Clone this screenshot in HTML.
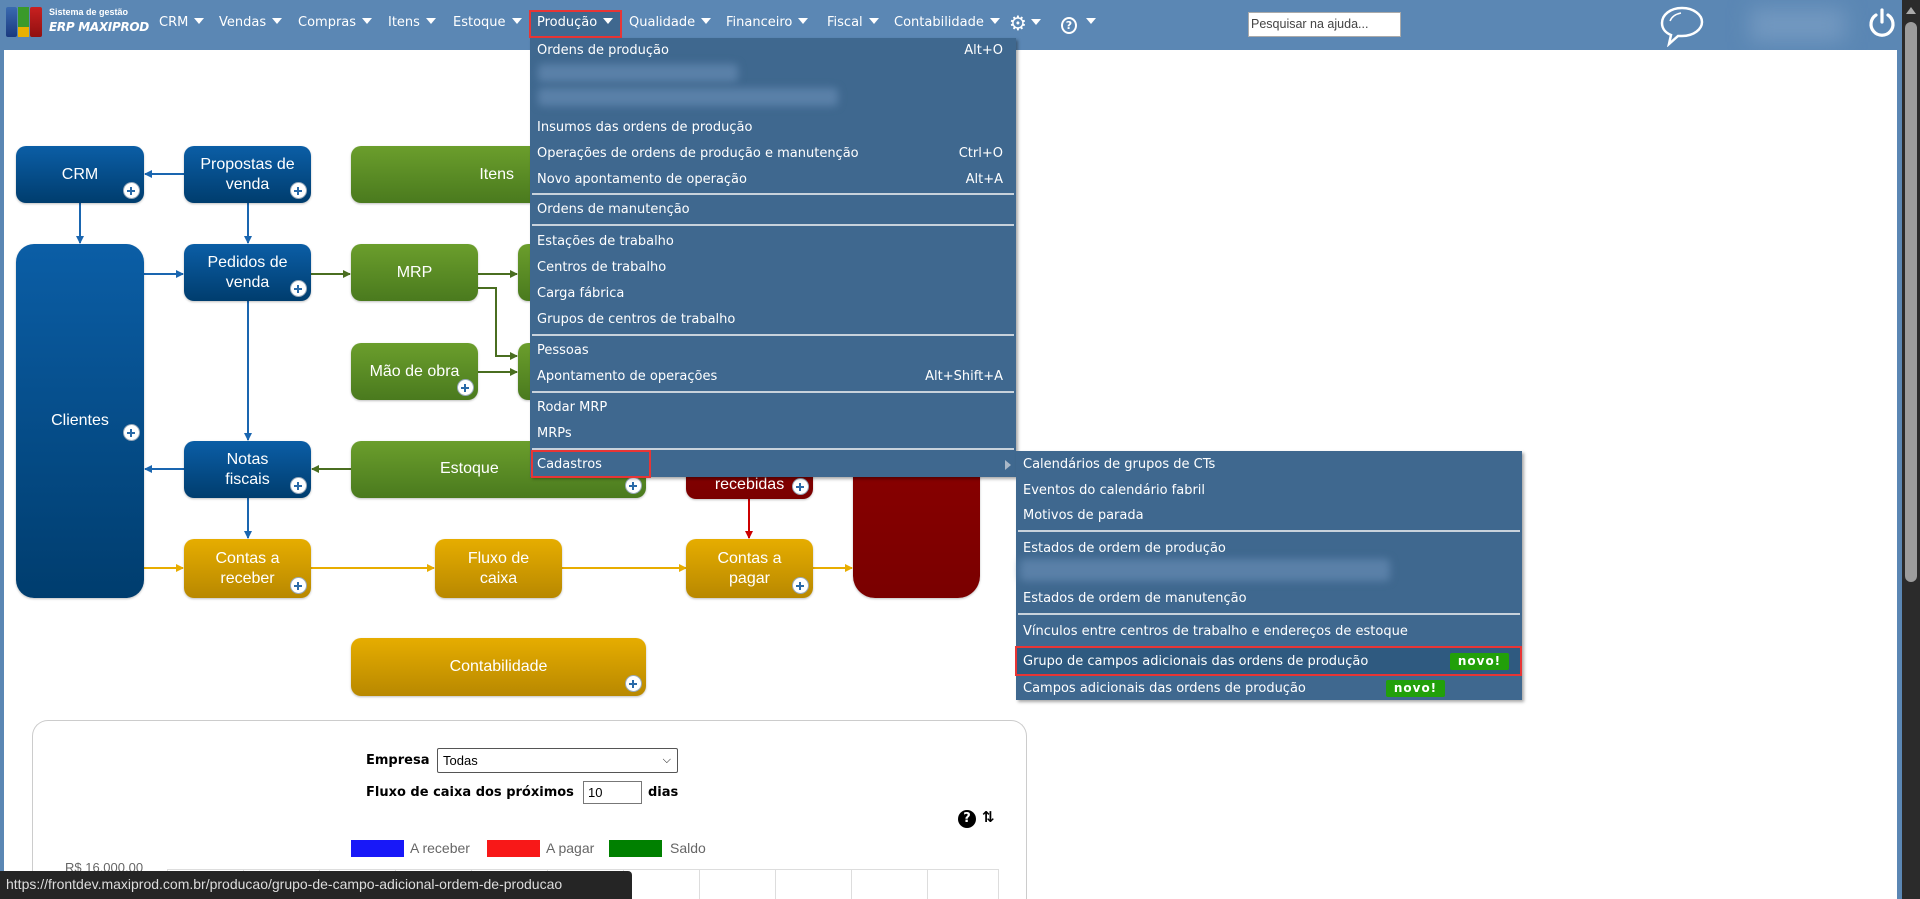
<!DOCTYPE html>
<html><head><meta charset="utf-8">
<style>
*{margin:0;padding:0;box-sizing:border-box}
html,body{width:1920px;height:899px;overflow:hidden}
body{background:#5b87b4;font-family:"DejaVu Sans","Liberation Sans",sans-serif;position:relative}
.abs{position:absolute}
#content{position:absolute;left:4px;top:50px;width:1893px;height:849px;background:#fff}
.nav{position:absolute;top:15px;color:#fff;font-size:13px}
.tri{display:inline-block;width:0;height:0;border-left:5px solid transparent;border-right:5px solid transparent;border-top:6px solid #fff;vertical-align:2px;margin-left:6px}
.box{position:absolute;border-radius:10px;color:#fff;font-family:"Liberation Sans",sans-serif;font-size:16px;text-align:center;display:flex;align-items:center;justify-content:center;line-height:20px;box-shadow:0 1px 2px rgba(0,0,0,.25)}
.b{background:linear-gradient(#0b5ea6,#003d6e)}
.g{background:linear-gradient(#6b9e2c,#4a7a1e)}
.y{background:linear-gradient(#e6ad00,#b88800)}
.r{background:linear-gradient(#8e0000,#7a0000)}
.plus{position:absolute;right:4px;bottom:4px;width:17px;height:17px;border-radius:50%;background:#fff;border:1.5px solid #9ab;}
.plus:before{content:"";position:absolute;left:3px;top:6.5px;width:8px;height:2px;background:#2a6aa8}
.plus:after{content:"";position:absolute;left:6px;top:3.5px;width:2px;height:8px;background:#2a6aa8}
.menu{position:absolute;background:#3f688f;box-shadow:2px 2px 3px rgba(0,0,0,.35);font-size:13px;color:#fff}
.mi{position:absolute;left:7px;right:13px;height:20px;line-height:20px;white-space:nowrap}
.mi span{position:absolute;right:0}
.sep{position:absolute;left:2px;right:2px;height:2px;background:#c8d2dc}
.blur{position:absolute;background:#5a80a8;filter:blur(4px);border-radius:4px}
.novo{position:absolute;background:#22a00a;color:#fff;font-weight:bold;font-size:12px;letter-spacing:1px;text-align:center;border-radius:2px;height:17px;line-height:17px;width:59px}
.lab{font-family:"Liberation Sans",sans-serif;font-size:14px;color:#000}
</style></head><body>
<div class="abs" style="left:6px;top:7px;width:11px;height:30px;background:linear-gradient(#3a6ab0,#1a3a80);border-radius:2px"></div>
<div class="abs" style="left:18px;top:7px;width:11px;height:20px;background:#3a9a2a"></div>
<div class="abs" style="left:18px;top:27px;width:11px;height:10px;background:#e8b000"></div>
<div class="abs" style="left:30px;top:7px;width:12px;height:30px;background:linear-gradient(#c82020,#901010);border-radius:2px"></div>
<div class="abs" style="left:49px;top:7px;color:#fff;font-size:9px;font-weight:bold;font-family:'Liberation Sans',sans-serif">Sistema de gestão</div>
<div class="abs" style="left:49px;top:20px;color:#fff;font-size:12px;font-weight:bold;font-style:italic;font-family:'DejaVu Sans',sans-serif;letter-spacing:-0.3px">ERP MAXIPROD</div>
<div class="nav" style="left:159px">CRM<i class="tri"></i></div>
<div class="nav" style="left:219px">Vendas<i class="tri"></i></div>
<div class="nav" style="left:298px">Compras<i class="tri"></i></div>
<div class="nav" style="left:388px">Itens<i class="tri"></i></div>
<div class="nav" style="left:453px">Estoque<i class="tri"></i></div>
<div class="abs" style="left:529px;top:10px;width:93px;height:28px;background:#3f688f;border:2px solid #e83535"></div>
<div class="nav" style="left:537px">Produção<i class="tri"></i></div>
<div class="nav" style="left:629px">Qualidade<i class="tri"></i></div>
<div class="nav" style="left:726px">Financeiro<i class="tri"></i></div>
<div class="nav" style="left:827px">Fiscal<i class="tri"></i></div>
<div class="nav" style="left:894px">Contabilidade<i class="tri"></i></div>
<div class="nav" style="left:1009px;top:11px;font-size:20px">⚙<i class="tri" style="margin-left:4px;vertical-align:5px"></i></div>
<div class="abs" style="left:1061px;top:17px;width:16px;height:17px;border:2px solid #fff;border-radius:50%;color:#fff;font-size:11px;text-align:center;line-height:13px;font-weight:bold">?</div>
<i class="tri abs" style="left:1086px;top:18px;margin:0"></i>
<div class="abs" style="left:1248px;top:12px;width:153px;height:25px;background:#fff;border:1px solid #aaa;font-size:12.5px;color:#444;line-height:23px;padding-left:2px;font-family:'Liberation Sans',sans-serif">Pesquisar na ajuda...</div>
<svg class="abs" style="left:1658px;top:5px" width="48" height="42" viewBox="0 0 48 42"><path d="M24 3C12 3 4 10 4 18c0 6 4 10 9 12l-2 9 9-8c1 0 3 0 4 0 12 0 20-7 20-14S36 3 24 3z" fill="none" stroke="#fff" stroke-width="2.5"/><path d="M12 16c2-5 6-7 11-8" fill="none" stroke="#fff" stroke-width="1.5"/></svg>
<div class="abs" style="left:1750px;top:8px;width:95px;height:34px;background:#7298c0;filter:blur(10px)"></div>
<svg class="abs" style="left:1868px;top:8px" width="28" height="30" viewBox="0 0 28 30"><path d="M8 7A11 11 0 1 0 20 7" fill="none" stroke="#fff" stroke-width="3.2" stroke-linecap="round"/><line x1="14" y1="2" x2="14" y2="14" stroke="#fff" stroke-width="3.2" stroke-linecap="round"/></svg>
<div class="abs" style="left:1902px;top:0;width:18px;height:899px;background:#2b2b2b;z-index:5"></div>
<div class="abs" style="left:1905px;top:22px;width:12px;height:560px;background:#9c9c9c;border-radius:6px;z-index:6"></div>
<div class="abs" style="left:1906px;top:7px;width:0;height:0;border-left:5px solid transparent;border-right:5px solid transparent;border-bottom:7px solid #aaa;z-index:6"></div>

<div id="content"></div>
<svg class="abs" style="left:0;top:0" width="1030" height="720">
<defs>
<marker id="ab" markerWidth="8" markerHeight="8" refX="7" refY="4" orient="auto" markerUnits="userSpaceOnUse"><path d="M0,0L8,4L0,8z" fill="#1a66b0"/></marker>
<marker id="ag" markerWidth="8" markerHeight="8" refX="7" refY="4" orient="auto" markerUnits="userSpaceOnUse"><path d="M0,0L8,4L0,8z" fill="#4a6e20"/></marker>
<marker id="ay" markerWidth="8" markerHeight="8" refX="7" refY="4" orient="auto" markerUnits="userSpaceOnUse"><path d="M0,0L8,4L0,8z" fill="#e8ad00"/></marker>
<marker id="ar" markerWidth="8" markerHeight="8" refX="7" refY="4" orient="auto" markerUnits="userSpaceOnUse"><path d="M0,0L8,4L0,8z" fill="#c00"/></marker>
</defs>
<g stroke-width="2" fill="none">
<path d="M184 174H145" stroke="#1a66b0" marker-end="url(#ab)"/>
<path d="M80 203V243" stroke="#1a66b0" marker-end="url(#ab)"/>
<path d="M248 203V243" stroke="#1a66b0" marker-end="url(#ab)"/>
<path d="M144 274H183" stroke="#1a66b0" marker-end="url(#ab)"/>
<path d="M248 301V440" stroke="#1a66b0" marker-end="url(#ab)"/>
<path d="M184 469H145" stroke="#1a66b0" marker-end="url(#ab)"/>
<path d="M248 498V538" stroke="#1a66b0" marker-end="url(#ab)"/>
<path d="M311 274H350" stroke="#4a6e20" marker-end="url(#ag)"/>
<path d="M478 274H517" stroke="#4a6e20" marker-end="url(#ag)"/>
<path d="M478 288H496V356H517" stroke="#4a6e20" marker-end="url(#ag)"/>
<path d="M478 372H517" stroke="#4a6e20" marker-end="url(#ag)"/>
<path d="M351 469H312" stroke="#4a6e20" marker-end="url(#ag)"/>
<path d="M144 568H183" stroke="#e8ad00" marker-end="url(#ay)"/>
<path d="M311 568H434" stroke="#e8ad00" marker-end="url(#ay)"/>
<path d="M562 568H686" stroke="#e8ad00" marker-end="url(#ay)"/>
<path d="M812 568H852" stroke="#e8ad00" marker-end="url(#ay)"/>
<path d="M749 499V538" stroke="#c00" marker-end="url(#ar)"/>
</g></svg>
<div class="box b" style="left:16px;top:146px;width:128px;height:57px">CRM<i class="plus"></i></div>
<div class="box b" style="left:184px;top:146px;width:127px;height:57px">Propostas de<br>venda<i class="plus"></i></div>
<div class="box g" style="left:351px;top:146px;width:300px;height:57px;justify-content:flex-end;padding-right:137px">Itens</div>
<div class="box b" style="left:16px;top:244px;width:128px;height:354px;border-radius:18px">Clientes<i class="plus" style="bottom:auto;top:180px"></i></div>
<div class="box b" style="left:184px;top:244px;width:127px;height:57px">Pedidos de<br>venda<i class="plus"></i></div>
<div class="box g" style="left:351px;top:244px;width:127px;height:57px">MRP</div>
<div class="box g" style="left:518px;top:244px;width:60px;height:57px"></div>
<div class="box g" style="left:351px;top:343px;width:127px;height:57px">Mão de obra<i class="plus"></i></div>
<div class="box g" style="left:518px;top:343px;width:60px;height:57px"></div>
<div class="box b" style="left:184px;top:441px;width:127px;height:57px">Notas<br>fiscais<i class="plus"></i></div>
<div class="box g" style="left:351px;top:441px;width:295px;height:57px"><span style="position:absolute;left:89px;top:18px">Estoque</span><i class="plus"></i></div>
<div class="box r" style="left:686px;top:441px;width:127px;height:58px;align-items:flex-end;padding-bottom:4px">recebidas<i class="plus"></i></div>
<div class="box r" style="left:853px;top:400px;width:127px;height:198px;border-radius:0 0 22px 22px"></div>
<div class="box y" style="left:184px;top:539px;width:127px;height:59px">Contas a<br>receber<i class="plus"></i></div>
<div class="box y" style="left:435px;top:539px;width:127px;height:59px">Fluxo de<br>caixa</div>
<div class="box y" style="left:686px;top:539px;width:127px;height:59px">Contas a<br>pagar<i class="plus"></i></div>
<div class="box y" style="left:351px;top:638px;width:295px;height:58px">Contabilidade<i class="plus"></i></div>

<div class="abs" style="left:32px;top:720px;width:995px;height:179px;border:1px solid #ccc;border-bottom:none;border-radius:16px 16px 0 0;background:#fff"></div>
<div class="abs lab" style="left:366px;top:753px;font-weight:bold;font-family:'DejaVu Sans',sans-serif;font-size:13px">Empresa</div>
<div class="abs" style="left:437px;top:748px;width:241px;height:25px;border:1px solid #555;border-radius:2px;font-size:13px;line-height:23px;padding-left:5px;font-family:'Liberation Sans',sans-serif">Todas<span style="position:absolute;right:6px;font-size:11px">&#x2335;</span></div>
<div class="abs" style="left:366px;top:785px;font-weight:bold;font-size:13px">Fluxo de caixa dos próximos</div>
<div class="abs" style="left:583px;top:781px;width:59px;height:23px;border:1px solid #777;font-size:13px;line-height:21px;padding-left:4px;font-family:'Liberation Sans',sans-serif">10</div>
<div class="abs" style="left:648px;top:785px;font-weight:bold;font-size:13px">dias</div>
<div class="abs" style="left:958px;top:810px;width:18px;height:18px;border-radius:50%;background:#000;color:#fff;font-weight:bold;font-size:13px;text-align:center;line-height:18px">?</div>
<div class="abs" style="left:982px;top:808px;font-size:15px;font-weight:bold">⇅</div>
<div class="abs" style="left:351px;top:840px;width:53px;height:17px;background:#1818f8"></div>
<div class="abs lab" style="left:410px;top:840px;color:#666">A receber</div>
<div class="abs" style="left:487px;top:840px;width:53px;height:17px;background:#f81818"></div>
<div class="abs lab" style="left:546px;top:840px;color:#666">A pagar</div>
<div class="abs" style="left:609px;top:840px;width:53px;height:17px;background:#008000"></div>
<div class="abs lab" style="left:670px;top:840px;color:#666">Saldo</div>
<div class="abs lab" style="left:65px;top:860px;color:#666;font-size:13px">R$ 16.000,00</div>
<div class="abs" style="left:167px;top:869px;width:832px;height:30px;border:1px solid #ddd;border-bottom:none;background:repeating-linear-gradient(90deg,transparent 0 75px,#ddd 75px 76px)"></div>

<div class="abs" style="left:0;top:871px;width:632px;height:28px;background:#252525;border-top-right-radius:4px;color:#ddd;font-family:'Liberation Sans',sans-serif;font-size:14px;line-height:26px;padding-left:6px">https://frontdev.maxiprod.com.br/producao/grupo-de-campo-adicional-ordem-de-producao</div>

<div class="menu" style="left:530px;top:38px;width:486px;height:439px">
<div class="mi" style="top:3px">Ordens de produção<span>Alt+O</span></div>
<div class="blur" style="left:8px;top:26px;width:200px;height:18px"></div>
<div class="blur" style="left:8px;top:50px;width:300px;height:18px"></div>
<div class="mi" style="top:80px">Insumos das ordens de produção</div>
<div class="mi" style="top:106px">Operações de ordens de produção e manutenção<span>Ctrl+O</span></div>
<div class="mi" style="top:132px">Novo apontamento de operação<span>Alt+A</span></div>
<div class="sep" style="top:155px"></div>
<div class="mi" style="top:162px">Ordens de manutenção</div>
<div class="sep" style="top:186px"></div>
<div class="mi" style="top:194px">Estações de trabalho</div>
<div class="mi" style="top:220px">Centros de trabalho</div>
<div class="mi" style="top:246px">Carga fábrica</div>
<div class="mi" style="top:272px">Grupos de centros de trabalho</div>
<div class="sep" style="top:296px"></div>
<div class="mi" style="top:303px">Pessoas</div>
<div class="mi" style="top:329px">Apontamento de operações<span>Alt+Shift+A</span></div>
<div class="sep" style="top:353px"></div>
<div class="mi" style="top:360px">Rodar MRP</div>
<div class="mi" style="top:386px">MRPs</div>
<div class="sep" style="top:410px"></div>
<div class="abs" style="left:1px;top:412px;width:120px;height:28px;border:2px solid #e83535"></div>
<div class="mi" style="top:417px">Cadastros</div>
<div class="abs" style="left:475px;top:422px;width:0;height:0;border-top:5px solid transparent;border-bottom:5px solid transparent;border-left:6px solid #aab8c8"></div>
</div>
<div class="menu" style="left:1016px;top:451px;width:506px;height:249px">
<div class="mi" style="top:4px">Calendários de grupos de CTs</div>
<div class="mi" style="top:30px">Eventos do calendário fabril</div>
<div class="mi" style="top:55px">Motivos de parada</div>
<div class="sep" style="top:79px"></div>
<div class="mi" style="top:88px">Estados de ordem de produção</div>
<div class="blur" style="left:4px;top:108px;width:370px;height:22px"></div>
<div class="mi" style="top:138px">Estados de ordem de manutenção</div>
<div class="sep" style="top:162px"></div>
<div class="mi" style="top:171px">Vínculos entre centros de trabalho e endereços de estoque</div>
<div class="abs" style="left:-1px;top:195px;width:507px;height:30px;background:#2f5a80;border:2px solid #e83535"></div>
<div class="mi" style="top:201px">Grupo de campos adicionais das ordens de produção</div>
<div class="novo" style="left:434px;top:202px">novo!</div>
<div class="mi" style="top:228px">Campos adicionais das ordens de produção</div>
<div class="novo" style="left:370px;top:229px">novo!</div>
</div>
</body></html>
